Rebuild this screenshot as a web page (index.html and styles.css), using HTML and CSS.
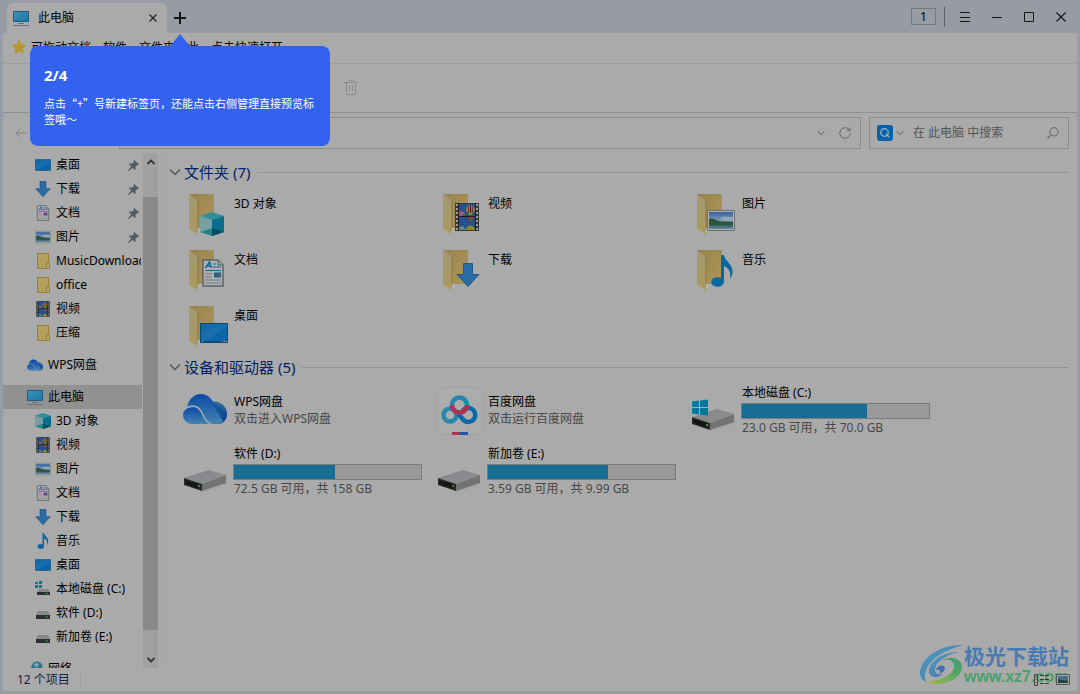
FILE: index.html
```html
<!DOCTYPE html>
<html lang="zh-CN">
<head>
    <meta charset="UTF-8">
    <meta name="viewport" content="width=device-width, initial-scale=1.0">
    <title>此电脑</title>
    <link rel="stylesheet" href="styles.css">
</head>
<body>
    <svg class="sprite" aria-hidden="true">
        <defs>
            <linearGradient id="gBack" x1="0" y1="0" x2="1" y2="1"><stop offset="0" stop-color="#988350"/><stop offset="1" stop-color="#ad9656"/></linearGradient>
            <linearGradient id="gFlap" x1="0" y1="0" x2="0" y2="1"><stop offset="0" stop-color="#a39a72"/><stop offset="1" stop-color="#ac985c"/></linearGradient>
            <linearGradient id="gScreen" x1="0" y1="0" x2="1" y2="1"><stop offset="0" stop-color="#0f66a3"/><stop offset=".55" stop-color="#1b71ae"/><stop offset=".56" stop-color="#0967a9"/><stop offset="1" stop-color="#0967a9"/></linearGradient>
            <linearGradient id="gPc" x1="0" y1="0" x2="1" y2="1"><stop offset="0" stop-color="#3f91b9"/><stop offset="1" stop-color="#1e77a6"/></linearGradient>
            <linearGradient id="gPhoto" x1="0" y1="0" x2="0" y2="1"><stop offset="0" stop-color="#35609f"/><stop offset=".5" stop-color="#7d9bb2"/><stop offset=".6" stop-color="#2d5545"/><stop offset=".75" stop-color="#2b5a62"/><stop offset="1" stop-color="#6d8a9c"/></linearGradient>
            <linearGradient id="gCloud" x1="0" y1="0" x2="0" y2="1"><stop offset="0" stop-color="#0b49a5"/><stop offset="1" stop-color="#4583b3"/></linearGradient>
            <linearGradient id="gCloud2" x1="0" y1="0" x2="1" y2="1"><stop offset="0" stop-color="#22759f"/><stop offset=".55" stop-color="#2063a0"/><stop offset="1" stop-color="#083a86"/></linearGradient>
            <linearGradient id="gDrive" x1="0" y1="0" x2="1" y2="1"><stop offset="0" stop-color="#82868a"/><stop offset="1" stop-color="#8f8f90"/></linearGradient>
            <linearGradient id="gSwoosh" x1="0" y1="0" x2="1" y2="1"><stop offset="0" stop-color="#4aa0c4"/><stop offset="1" stop-color="#3468ae"/></linearGradient>
            <linearGradient id="gLeaf" x1="0" y1="1" x2="1" y2="0"><stop offset="0" stop-color="#b0b832"/><stop offset=".6" stop-color="#4aa760"/><stop offset="1" stop-color="#359970"/></linearGradient>
        </defs>

        <symbol id="folder" viewBox="0 0 48 48">
            <path d="M16 36h3v3l-3 2z" fill="#b2b2b2"/>
            <path d="M7 2h25v34H7z" fill="url(#gBack)"/>
            <path d="M7 2l9 7v33l-9-5z" fill="url(#gFlap)"/>
            <path d="M16 9v27" stroke="#8a7640" fill="none"/>
        </symbol>
        <symbol id="folder-small" viewBox="0 0 16 16">
            <path d="M2.500.500h11v15h-11z" fill="#b49f5c" stroke="#97803a"/>
            <path d="M11.500 9.500h3v6h-3z" fill="#b9a564" stroke="#97803a"/>
        </symbol>
        <symbol id="cube" viewBox="0 0 24 24">
            <path d="M0 4l12-4 12 4-12 4z" fill="#2f8f99"/>
            <path d="M0 4l12 4v16L0 20z" fill="#67999b"/>
            <path d="M24 4L12 8v16l12-4z" fill="#086f8c"/>
            <path d="M0 20l12-4v8z" fill="#248388"/>
            <path d="M12 16l12 4-12 4z" fill="#064b62"/>
            <path d="M0 4l12 4v8L0 20z" fill="#8aa6a8" opacity=".5"/>
        </symbol>
        <symbol id="doc" viewBox="0 0 22 28">
            <path d="M1 1h15l5 5v21H1z" fill="#afb1b3" stroke="#5c6368" stroke-width="1.500"/>
            <path d="M16 1v5h5" fill="#999" stroke="#5c6368"/>
            <path d="M3.500 9l4-6 2 6M5 7h4" fill="none" stroke="#14629c" stroke-width="1.500"/>
            <path d="M11 5h3M11 8h8M3 11.500h16" stroke="#14629c" stroke-width="1.200"/>
            <path d="M3 15h7M3 18h7M3 21h16M3 24h16" stroke="#777"/>
            <path d="M12 13.500h7v5h-7z" fill="#2f5e7a"/>
        </symbol>
        <symbol id="screen" viewBox="0 0 28 20">
            <path d="M.500.500h27v19H.500z" fill="url(#gScreen)" stroke="#0b4570"/>
            <path d="M1 18.500h26" stroke="#0d4f80"/>
            <path d="M2 18.500h1M22 18.500h1M24 18.500h1M26 18.500h1" stroke="#a8b8c4"/>
        </symbol>
        <symbol id="film" viewBox="0 0 24 28">
            <path d="M0 0h24v28H0z" fill="#3a3a3a"/>
            <path d="M2 1v27M22 1v27" stroke="#9b9b9b" stroke-width="2" stroke-dasharray="2 2"/>
            <path d="M4 1h16v12H4zM4 14h16v13H4z" fill="#28508d"/>
            <path d="M4 10h5l3 1h8v2H4z" fill="#2c6034"/>
            <path d="M4 8l5 1 1 3-6 1z" fill="#9c5a78"/>
            <path d="M11 7a4.500 4.500 0 0 1 9 0c0 2-3 3-3.500 5h-2C14 10 11 9 11 7z" fill="#8f8a24"/>
            <path d="M13 3.500h1v6h-1zM17 3.500h1v6h-1z" fill="#7a2833"/>
            <path d="M15 3h1v7h-1z" fill="#222"/>
            <path d="M12 14h7l-3.500 6z" fill="#9c2c35"/>
            <path d="M15 14h2v4h-2z" fill="#277a3c"/>
            <path d="M11 27c1-6 8-6 9 0z" fill="#928b23"/>
            <path d="M4 24l4-1 3 4H4z" fill="#5e8c85"/>
            <path d="M3.500 0v28M20.500 0v28M4 13.500h16" stroke="#1e1e1e"/>
        </symbol>
        <symbol id="photo" viewBox="0 0 28 21">
            <path d="M.500.500h27v20H.500z" fill="#b0b0b0" stroke="#6b6e70"/>
            <path d="M2 2h24v17H2z" fill="url(#gPhoto)"/>
            <path d="M2 9c5-2 8 2 12 3s8 1 12 1v2H2z" fill="#2e553a"/>
            <path d="M13 8c4-3 7 0 13-1v4c-6 1-9-1-13-3z" fill="#93a8b4"/>
        </symbol>
        <symbol id="arrow" viewBox="0 0 24 24">
            <path d="M7.500.500h9v11h6.500l-11 12-11-12h6.500z" fill="#2a6ba6" stroke="#205989"/>
        </symbol>
        <symbol id="note" viewBox="0 0 22 32">
            <ellipse cx="6.500" cy="27" rx="6.300" ry="4.800" fill="#0966a1"/>
            <path d="M10 0h3c0 5 9 9 8.500 17-.200 3-1 5-2.500 7 1.500-7-1-11-6-13v16h-3z" fill="#0966a1"/>
        </symbol>
        <symbol id="pc" viewBox="0 0 16 16">
            <path d="M.500 1.500h15v10H.500z" fill="url(#gPc)" stroke="#235a77"/>
            <path d="M5 13.500h6" stroke="#68757d"/>
            <path d="M0 15.500h16" stroke="#66788a"/>
        </symbol>
        <symbol id="cloud" viewBox="0 0 44 30">
            <path d="M26 8c9-2 18 3 18 12 0 6-4 10-9 10H26z" fill="url(#gCloud2)"/>
            <path d="M4 16C4 6 11 0 18 0c6 0 10 4 12 8l10 19c-1 2-3 3-6 3H12z" fill="url(#gCloud)"/>
            <path d="M28 8l12 19c4-3 4-6 4-9z" fill="#0b4289" opacity=".5"/>
            <path d="M9 30c-5 0-9-4-9-9 0-4 4-8 9-8 7 0 10 6 13 12 1 3 3 4 5 5z" fill="url(#gCloud)"/>
            <path d="M3 14c8-4 13-1 16 5 2 5 4 9 9 11" fill="none" stroke="#aaa" stroke-width="1.500"/>
        </symbol>
        <symbol id="baidu" viewBox="0 0 48 48">
            <rect x=".500" y=".500" width="47" height="47" rx="9" fill="#acacac" stroke="#a0a0a0"/>
            <g fill="none" stroke-width="4.500">
                <circle cx="14" cy="28" r="6.500" stroke="#2588ad"/>
                <path d="M26.500 24a7 7 0 1 1 1 9l-5-6" stroke="#0a68a6"/>
                <circle cx="23.500" cy="18" r="7.500" stroke="#2786ab"/>
                <path d="M16 18a7.500 7.500 0 0 0 15 0" stroke="#b03050"/>
            </g>
            <path d="M16 45h8v3h-8z" fill="#a63850"/>
            <path d="M24 45h8v3h-8z" fill="#1d57a2"/>
        </symbol>
        <symbol id="drive" viewBox="0 0 48 48">
            <path d="M18 43h4l24-8v1l-24 8z" fill="#a0a0a0"/>
            <path d="M2 30l25-8 17 5-24 9z" fill="url(#gDrive)"/>
            <path d="M20 36l24-9v8l-24 8z" fill="#737374"/>
            <path d="M2 30l18 6v7L2 37z" fill="#2a2a2a"/>
            <path d="M3 32l14 4v5L3 36z" fill="#161616"/>
            <path d="M16 37h2v2h-2z" fill="#28962f"/>
        </symbol>
        <symbol id="winlogo" viewBox="0 0 16 16">
            <path d="M0 2l7-1v6.500H0zM8 1l8-1v7.500H8zM0 8.500h7V15l-7-1zM8 8.500h8V16l-8-1z" fill="#04789c"/>
        </symbol>
        <symbol id="drive-small" viewBox="0 0 16 16">
            <path d="M3 6h10l2 4H1z" fill="#858789"/>
            <path d="M1 10h14v4H1z" fill="#2c2d2e"/>
            <path d="M11 11.500h2v1h-2z" fill="#30a53c"/>
        </symbol>
        <symbol id="drive-win" viewBox="0 0 16 16">
            <path d="M0 1h3v2H0zM4 0h3v3H4zM0 4h3v3H0zM4 4h3v3H4z" fill="#04789c"/>
            <path d="M4 8h9l2 3H2z" fill="#858789"/>
            <path d="M2 11h13v3H2z" fill="#2c2d2e"/>
            <path d="M11 12h2v1h-2z" fill="#30a53c"/>
        </symbol>
        <symbol id="network" viewBox="0 0 16 16">
            <circle cx="10" cy="6" r="5.500" fill="#2f7592"/>
            <path d="M7 3c2-2 4-1 5 1l-3 3z" fill="#7fa7ae"/>
            <path d="M0 8l8-3v7H0z" fill="#3d7089"/>
        </symbol>
        <symbol id="pin" viewBox="0 0 12 12">
            <path d="M7 0l5 5-1 1-1-.500-2 2 .500 2.500-1 1L5 8.500 1 12l-1-.500L3.500 7 1 4.500l1-1 2.500.500 2-2L6 1z" fill="#535c62"/>
        </symbol>
        <symbol id="chev" viewBox="0 0 12 12">
            <path d="M1 3.500l5 5 5-5" fill="none" stroke="currentColor" stroke-width="1.400"/>
        </symbol>
    </svg>

    <header class="titlebar">
        <div class="tab">
            <svg class="icon"><use href="#pc"/></svg>
            <span>此电脑</span>
            <button class="tab-close" aria-label="关闭标签"><svg width="8" height="8" viewBox="0 0 8 8"><path d="M.500.500l7 7m0-7l-7 7" stroke="#222" stroke-width="1.200"/></svg></button>
        </div>
        <button class="tab-new" aria-label="新建标签页"><svg width="12" height="12" viewBox="0 0 12 12"><path d="M6 0v12M0 6h12" stroke="#151515" stroke-width="2"/></svg></button>
        <div class="controls">
            <button class="count">1</button>
            <span class="divider"></span>
            <button aria-label="菜单"><svg width="10" height="10" viewBox="0 0 10 10"><path d="M0 .500h10M0 5.500h10M0 9.500h10" stroke="#151515"/></svg></button>
            <button aria-label="最小化"><svg width="10" height="10" viewBox="0 0 10 10"><path d="M0 5.500h10" stroke="#151515"/></svg></button>
            <button aria-label="最大化"><svg width="10" height="10" viewBox="0 0 10 10"><path d="M.500.500h9v9h-9z" fill="none" stroke="#151515"/></svg></button>
            <button aria-label="关闭"><svg width="10" height="10" viewBox="0 0 10 10"><path d="M.500.500l9 9m0-9l-9 9" stroke="#151515" stroke-width="1.200"/></svg></button>
        </div>
    </header>

    <div class="window">
        <div class="favbar">
            <svg width="14" height="14" viewBox="0 0 14 14"><path d="M7 .500l2 4.300 4.600.500-3.400 3.200 1 4.700L7 10.900l-4.200 2.300 1-4.700L.400 5.300 5 4.800z" fill="#b5992f" stroke="#b5992f" stroke-linejoin="round"/></svg>
            <span>可拖动文档、软件、文件夹至此，点击快速打开</span>
        </div>

        <div class="toolbar">
            <button aria-label="删除"><svg width="14" height="16" viewBox="0 0 14 16"><path d="M0 2.500h14M4.500.500h5M2.500 3v11.500h9V3M5.500 6v5M8.500 6v5" fill="none" stroke="#8c8c8c"/></svg></button>
        </div>

        <div class="navbar">
            <button class="back" aria-label="后退"><svg width="12" height="10" viewBox="0 0 12 10"><path d="M12 5H1m4-4L1 5l4 4" fill="none" stroke="#858585"/></svg></button>
            <div class="box address">
                <input type="text" aria-label="地址">
                <svg class="mini"><use href="#chev"/></svg>
                <button aria-label="刷新"><svg width="12" height="12" viewBox="0 0 12 12"><path d="M10.500 3A5.300 5.300 0 1 0 11.400 6.500M11 .500v3H8" fill="none" stroke="#666"/></svg></button>
            </div>
            <div class="box search">
                <span class="engine"><svg width="10" height="10" viewBox="0 0 10 10"><circle cx="4.500" cy="4.500" r="3.800" fill="none" stroke="#a5b9c8" stroke-width="1.200"/><path d="M6 6l3 3" stroke="#a5b9c8" stroke-width="1.200"/></svg></span>
                <svg class="mini"><use href="#chev"/></svg>
                <input type="text" placeholder="在 此电脑 中搜索" aria-label="搜索">
                <svg width="12" height="12" viewBox="0 0 12 12"><circle cx="7" cy="4.800" r="4.200" fill="none" stroke="#666"/><path d="M4 8L.500 11.500" stroke="#666" stroke-width="1.200"/></svg>
            </div>
        </div>

        <div class="content">
            <nav class="sidebar">
                <a href="#"><svg class="icon"><use href="#screen"/></svg><span>桌面</span><svg class="pin"><use href="#pin"/></svg></a>
                <a href="#"><svg class="icon"><use href="#arrow"/></svg><span>下载</span><svg class="pin"><use href="#pin"/></svg></a>
                <a href="#"><svg class="icon"><use href="#doc"/></svg><span>文档</span><svg class="pin"><use href="#pin"/></svg></a>
                <a href="#"><svg class="icon"><use href="#photo"/></svg><span>图片</span><svg class="pin"><use href="#pin"/></svg></a>
                <a href="#"><svg class="icon"><use href="#folder-small"/></svg><span>MusicDownload</span></a>
                <a href="#"><svg class="icon"><use href="#folder-small"/></svg><span>office</span></a>
                <a href="#"><svg class="icon"><use href="#film"/></svg><span>视频</span></a>
                <a href="#"><svg class="icon"><use href="#folder-small"/></svg><span>压缩</span></a>
                <a href="#" class="root"><svg class="icon"><use href="#cloud"/></svg><span>WPS网盘</span></a>
                <a href="#" class="root active"><svg class="icon"><use href="#pc"/></svg><span>此电脑</span></a>
                <a href="#"><svg class="icon"><use href="#cube"/></svg><span>3D 对象</span></a>
                <a href="#"><svg class="icon"><use href="#film"/></svg><span>视频</span></a>
                <a href="#"><svg class="icon"><use href="#photo"/></svg><span>图片</span></a>
                <a href="#"><svg class="icon"><use href="#doc"/></svg><span>文档</span></a>
                <a href="#"><svg class="icon"><use href="#arrow"/></svg><span>下载</span></a>
                <a href="#"><svg class="icon"><use href="#note"/></svg><span>音乐</span></a>
                <a href="#"><svg class="icon"><use href="#screen"/></svg><span>桌面</span></a>
                <a href="#"><svg class="icon"><use href="#drive-win"/></svg><span>本地磁盘 (C:)</span></a>
                <a href="#"><svg class="icon"><use href="#drive-small"/></svg><span>软件 (D:)</span></a>
                <a href="#"><svg class="icon"><use href="#drive-small"/></svg><span>新加卷 (E:)</span></a>
                <a href="#" class="root"><svg class="icon"><use href="#network"/></svg><span>网络</span></a>
            </nav>
            <div class="scrollbar">
                <button aria-label="向上滚动"><svg width="8" height="6" viewBox="0 0 8 6"><path d="M.500 5L4 1.500 7.500 5" fill="none" stroke="#333" stroke-width="1.800"/></svg></button>
                <div class="track"><div class="thumb"></div></div>
                <button aria-label="向下滚动"><svg width="8" height="6" viewBox="0 0 8 6"><path d="M.500 1L4 4.500 7.500 1" fill="none" stroke="#333" stroke-width="1.800"/></svg></button>
            </div>

            <main>
                <h2><svg class="mini"><use href="#chev"/></svg>文件夹 (7)</h2>
                <div class="folders">
                    <div class="item"><svg class="big"><use href="#folder"/><use href="#cube" x="18" y="20" width="24" height="24"/></svg><span>3D 对象</span></div>
                    <div class="item"><svg class="big"><use href="#folder"/><use href="#film" x="19" y="11" width="24" height="28"/></svg><span>视频</span></div>
                    <div class="item"><svg class="big"><use href="#folder"/><use href="#photo" x="17" y="18" width="28" height="21"/></svg><span>图片</span></div>
                    <div class="item"><svg class="big"><use href="#folder"/><use href="#doc" x="20" y="11" width="22" height="28"/></svg><span>文档</span></div>
                    <div class="item"><svg class="big"><use href="#folder"/><use href="#arrow" x="20" y="15" width="24" height="24"/></svg><span>下载</span></div>
                    <div class="item"><svg class="big"><use href="#folder"/><use href="#note" x="21" y="7" width="22" height="32"/></svg><span>音乐</span></div>
                    <div class="item"><svg class="big"><use href="#folder"/><use href="#screen" x="18" y="19" width="28" height="20"/></svg><span>桌面</span></div>
                </div>

                <h2><svg class="mini"><use href="#chev"/></svg>设备和驱动器 (5)</h2>
                <div class="devices">
                    <div class="item">
                        <svg class="big"><use href="#cloud" x="1" y="7" width="44" height="30"/></svg>
                        <div class="info"><div class="name">WPS网盘</div><div class="sub">双击进入WPS网盘</div></div>
                    </div>
                    <div class="item">
                        <svg class="big"><use href="#baidu"/></svg>
                        <div class="info"><div class="name">百度网盘</div><div class="sub">双击运行百度网盘</div></div>
                    </div>
                    <div class="item">
                        <svg class="big"><use href="#drive"/><use href="#winlogo" x="2" y="12" width="16" height="17"/></svg>
                        <div class="info">
                            <div class="name">本地磁盘 (C:)</div>
                            <div class="bar"><div class="fill" style="width: 67%"></div></div>
                            <div class="sub">23.0 GB 可用，共 70.0 GB</div>
                        </div>
                    </div>
                    <div class="item">
                        <svg class="big"><use href="#drive"/></svg>
                        <div class="info">
                            <div class="name">软件 (D:)</div>
                            <div class="bar"><div class="fill" style="width: 54%"></div></div>
                            <div class="sub">72.5 GB 可用，共 158 GB</div>
                        </div>
                    </div>
                    <div class="item">
                        <svg class="big"><use href="#drive"/></svg>
                        <div class="info">
                            <div class="name">新加卷 (E:)</div>
                            <div class="bar"><div class="fill" style="width: 64%"></div></div>
                            <div class="sub">3.59 GB 可用，共 9.99 GB</div>
                        </div>
                    </div>
                </div>
            </main>
        </div>

        <footer class="status">
            <span class="total">12 个项目</span>
            <button class="view" aria-label="详细信息"><svg width="16" height="12" viewBox="0 0 16 12"><path d="M.500.500h3v11h-3z" fill="none" stroke="#444"/><path d="M2 2v8" stroke="#923" stroke-dasharray="1 2"/><path d="M6 1.500h4M11 1.500h4M6 5.500h4M11 5.500h4M6 9.500h4M11 9.500h4" stroke="#333"/></svg></button>
            <button class="view" aria-label="大图标"><svg width="14" height="11" viewBox="0 0 14 11"><path d="M.500.500h13v10H.500z" fill="#aaa" stroke="#555"/><path d="M2 2h10v7H2z" fill="#43708f"/><path d="M2 5l4 1 6 1v2H2z" fill="#1d4436"/></svg></button>
        </footer>
    </div>

    <div class="watermark">
        <svg width="44" height="42" viewBox="0 0 44 42">
            <path d="M43 1C24 0 2 11 0 28c0 5 2 8 6 10-3-7 0-16 8-23C22 8 33 4 43 1z" fill="url(#gSwoosh)"/>
            <path d="M38 8C22 8 9 18 9 27c0 7 9 8 14 3-5 1-9-1-8-5 1-8 12-14 23-17z" fill="url(#gSwoosh)"/>
            <path d="M22 17c7-3 13 0 12 7-2 8-15 13-28 14 10 5 33 1 36-14 1-9-12-14-20-7z" fill="url(#gLeaf)"/>
            <path d="M16 26c1-5 8-6 9-2 0 3-3 5-6 6 3-3 0-5-3-4z" fill="#3468ae"/>
        </svg>
        <div>
            <div class="brand">极光下载站</div>
            <div class="site">www.xz7.com</div>
        </div>
    </div>

    <div class="guide" role="dialog">
        <h3>2/4</h3>
        <p>点击“+”号新建标签页，还能点击右侧管理直接预览标签哦～</p>
    </div>
</body>
</html>
```
FILE: styles.css
```css
* {
    box-sizing: border-box;
}
body {
    margin: 0;
    height: 100vh;
    display: flex;
    flex-direction: column;
    position: relative;
    overflow: hidden;
    background: #979ca4;
    color: #000;
    font-family: "Noto Sans", "Noto Sans CJK SC", sans-serif;
    font-size: 12px;
    line-height: 16px;
}
button {
    display: flex;
    align-items: center;
    justify-content: center;
    padding: 0;
    border: none;
    background: none;
    color: inherit;
    font: inherit;
}
input {
    flex: 1;
    min-width: 0;
    padding: 0;
    border: none;
    outline: none;
    background: none;
    font: inherit;
}
.sprite {
    position: absolute;
    width: 0;
    height: 0;
}
.icon {
    width: 16px;
    height: 16px;
    flex: none;
}
.mini {
    width: 8px;
    height: 8px;
    flex: none;
    color: #555;
}

/* title bar */
.titlebar {
    display: flex;
    flex: none;
    height: 33px;
    padding: 0 3px 0 7px;
}
.tab {
    display: flex;
    align-items: center;
    width: 160px;
    margin-top: 3px;
    padding: 0 6px;
    border-radius: 6px 6px 0 0;
    background: #aaa;
}
.tab span {
    flex: 1;
    margin-left: 9px;
}
.tab-close {
    width: 16px;
    height: 16px;
}
.tab-new {
    width: 26px;
    margin-top: 3px;
}
.controls {
    display: flex;
    align-items: center;
    margin-left: auto;
}
.controls button {
    width: 32px;
    height: 32px;
}
.controls .count {
    width: 25px;
    height: 17px;
    border: 1px solid #74777c;
}
.divider {
    width: 1px;
    height: 20px;
    margin: 0 4px 0 8px;
    background: #5d6066;
}

/* window */
.window {
    flex: 1;
    min-height: 0;
    display: flex;
    flex-direction: column;
    margin: 0 3px 3px;
    background: #aaa;
}
.favbar {
    display: flex;
    flex: none;
    gap: 5px;
    height: 31px;
    padding: 7px 9px 0;
    border-bottom: 1px solid #9e9e9e;
}
.toolbar {
    display: flex;
    align-items: center;
    flex: none;
    height: 49px;
    padding-left: 341px;
    border-bottom: 1px solid #8e9094;
}
.navbar {
    display: flex;
    align-items: center;
    flex: none;
    gap: 8px;
    height: 40px;
    padding: 0 8px;
}
.back {
    width: 20px;
    height: 20px;
    margin-right: 80px;
}
.box {
    display: flex;
    align-items: center;
    height: 32px;
    border: 1px solid #8c8c8c;
}
.address {
    flex: 1;
    gap: 14px;
    padding: 0 9px;
}
.search {
    width: 200px;
    gap: 9px;
    padding: 0 9px 0 7px;
}
.search .mini {
    margin-left: -6px;
}
.search input::placeholder {
    color: #555;
    opacity: 1;
}
.engine {
    display: flex;
    align-items: center;
    justify-content: center;
    width: 16px;
    height: 16px;
    border-radius: 3px;
    background: #0062ab;
}
.content {
    flex: 1;
    min-height: 0;
    display: flex;
}

/* sidebar */
.sidebar {
    width: 139px;
    flex: none;
    overflow: hidden;
}
.sidebar a {
    display: flex;
    align-items: center;
    gap: 5px;
    height: 24px;
    padding: 0 1px 0 32px;
    color: #000;
    text-decoration: none;
    white-space: nowrap;
}
.sidebar span {
    overflow: hidden;
}
.sidebar .root {
    margin-top: 8px;
    padding-left: 24px;
}
.sidebar .active {
    background: #919191;
}
.pin {
    width: 11px;
    height: 11px;
    margin: 0 2px 0 auto;
}
.scrollbar {
    display: flex;
    flex-direction: column;
    width: 15px;
    margin-left: 1px;
    background: #a0a0a0;
}
.scrollbar button {
    height: 17px;
}
.track {
    flex: 1;
    padding: 27px 0 21px;
}
.thumb {
    height: 100%;
    background: #898989;
}

/* file area */
main {
    flex: 1;
    min-width: 0;
    margin-left: 3px;
    padding: 8px 8px 0 7px;
    border-left: 1px solid #a4a4a4;
}
h2 {
    display: flex;
    align-items: center;
    margin: 0 0 7px;
    font-size: 15px;
    font-weight: normal;
    line-height: 22px;
    color: #002266;
}
h2 .mini {
    width: 12px;
    height: 12px;
    margin-right: 3px;
}
h2::after {
    content: "";
    flex: 1;
    height: 1px;
    margin-left: 7px;
    background: #949494;
}
.folders,
.devices {
    display: grid;
    grid-template-columns: repeat(auto-fill, 254px);
    padding-left: 13px;
}
.folders {
    row-gap: 8px;
    padding-top: 2px;
    margin-bottom: 4px;
}
.devices {
    row-gap: 9px;
}
.item {
    display: flex;
    gap: 3px;
}
.big {
    width: 48px;
    height: 48px;
    flex: none;
    overflow: visible;
}
.folders span {
    margin-top: 4px;
    padding-left: 1px;
}
.devices .item {
    align-items: center;
    height: 52px;
}
.name {
    padding-left: 1px;
}
.sub {
    padding-left: 1px;
    line-height: 18px;
    color: #484848;
}
.bar {
    width: 189px;
    height: 16px;
    margin-top: 2px;
    border: 1px solid #7b7b7b;
    background: #999;
}
.fill {
    height: 100%;
    background: #196c92;
}

/* status bar */
.status {
    display: flex;
    align-items: center;
    flex: none;
    gap: 6px;
    height: 23px;
    padding: 0 7px 0 14px;
    color: #14233f;
}
.total {
    margin-right: auto;
    padding-right: 10px;
    border-right: 1px solid #9f9f9f;
}
.view {
    position: relative;
    z-index: 1;
}

.watermark {
    position: absolute;
    right: 11px;
    bottom: 8px;
    display: flex;
    align-items: center;
    opacity: 0.9;
    font-weight: bold;
    pointer-events: none;
}
.brand {
    font-size: 21px;
    line-height: 24px;
    color: #3f76b4;
}
.site {
    font-family: "Liberation Sans", sans-serif;
    font-size: 16px;
    line-height: 18px;
    color: #3fa065;
}

/* guide bubble */
.guide {
    position: absolute;
    top: 46px;
    left: 30px;
    width: 300px;
    height: 100px;
    padding: 19px 12px 0 14px;
    border-radius: 8px;
    background: #3363ee;
    color: #fff;
    font-size: 11px;
}
.guide::before {
    content: "";
    position: absolute;
    top: -12px;
    left: 140px;
    border: 10px solid transparent;
    border-top: none;
    border-bottom: 12px solid #3363ee;
}
.guide h3 {
    margin: 0 0 10px;
    font-size: 15px;
    line-height: 20px;
}
.guide p {
    margin: 0;
    font-family: "Noto Sans CJK SC", sans-serif;
}
```
